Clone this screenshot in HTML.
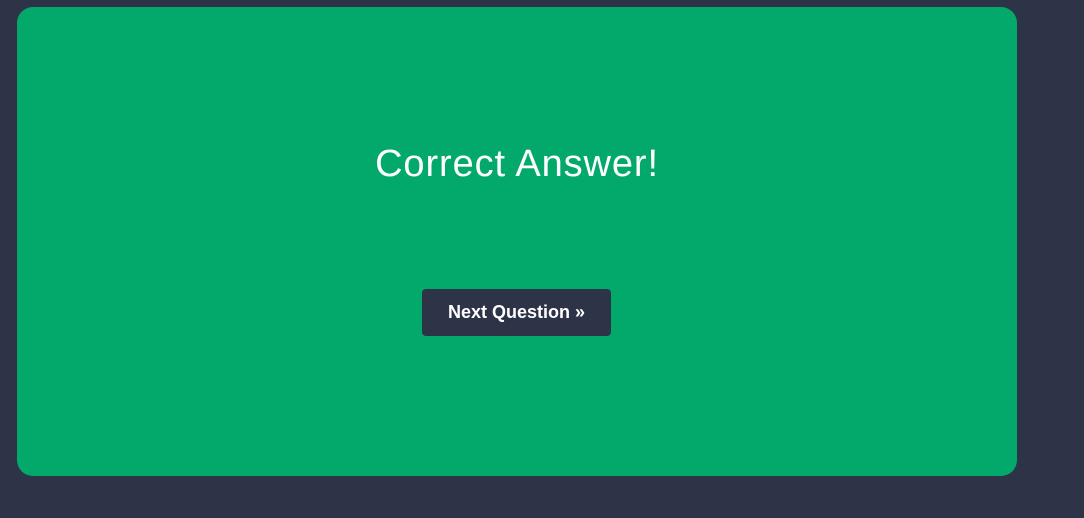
<!DOCTYPE html>
<html><head><style>
body{margin:0;width:1084px;height:518px;background:#2e3447;overflow:hidden;font-family:"Liberation Sans",sans-serif;}
.card{position:absolute;left:17px;top:7px;width:1000px;height:469px;background:#03a96b;border-radius:16px;}
h1{position:absolute;left:0;width:1034px;top:140px;margin:0;text-align:center;color:#fff;font-weight:normal;font-size:38px;letter-spacing:0.9px;line-height:48px;}
.btn{position:absolute;left:422px;top:289px;width:189px;height:47px;background:#2e3447;border-radius:4px;color:#fff;font-size:18px;font-weight:bold;line-height:47px;text-align:center;}
</style></head><body>
<div class="card"></div>
<h1>Correct Answer!</h1>
<div class="btn">Next Question »</div>
</body></html>
